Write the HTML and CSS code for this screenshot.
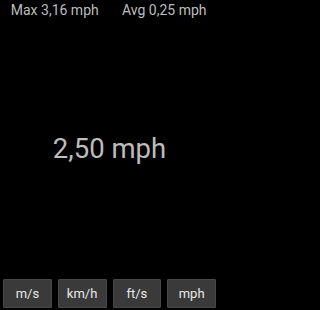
FILE: index.html
```html
<!DOCTYPE html>
<html>
<head>
<meta charset="utf-8">
<link rel="stylesheet" href="styles.css">
</head>
<body>
<div class="screen">
  <div class="stats">
    <div class="stat">Max 3,16 mph</div>
    <div class="stat">Avg 0,25 mph</div>
  </div>
  <div class="speed">2,50 mph</div>
  <div class="units">
    <div class="cell"><button class="btn">m/s</button></div>
    <div class="cell"><button class="btn">km/h</button></div>
    <div class="cell"><button class="btn">ft/s</button></div>
    <div class="cell"><button class="btn">mph</button></div>
  </div>
</div>
</body>
</html>
```
FILE: styles.css
```css
html, body {
  margin: 0;
  padding: 0;
  background: #000;
}
.screen {
  width: 219px;
  height: 310px;
  display: flex;
  flex-direction: column;
  font-family: Roboto, "Noto Sans", sans-serif;
  background: #000;
}
.stats {
  display: grid;
  grid-template-columns: 1fr 1fr;
  padding-top: 1px;
  height: 19px;
}
.stat {
  text-align: center;
  color: #bdbdbd;
  font-size: 14px;
  line-height: 18px;
}
.speed {
  flex: 1;
  display: flex;
  align-items: center;
  justify-content: center;
  color: #bdbdbd;
  font-size: 27.5px;
  padding-bottom: 2px;
}
.units {
  display: grid;
  grid-template-columns: repeat(4, 1fr);
  padding: 0 0 2px 0;
}
.cell {
  padding: 0 3px;
}
.btn {
  display: block;
  width: 100%;
  height: 29px;
  margin: 0;
  padding: 0;
  background: #3a3a3a;
  border: 1px solid #474747;
  border-radius: 1px;
  color: #e8e8e8;
  font-family: Roboto, "Noto Sans", sans-serif;
  font-size: 13px;
}
```
